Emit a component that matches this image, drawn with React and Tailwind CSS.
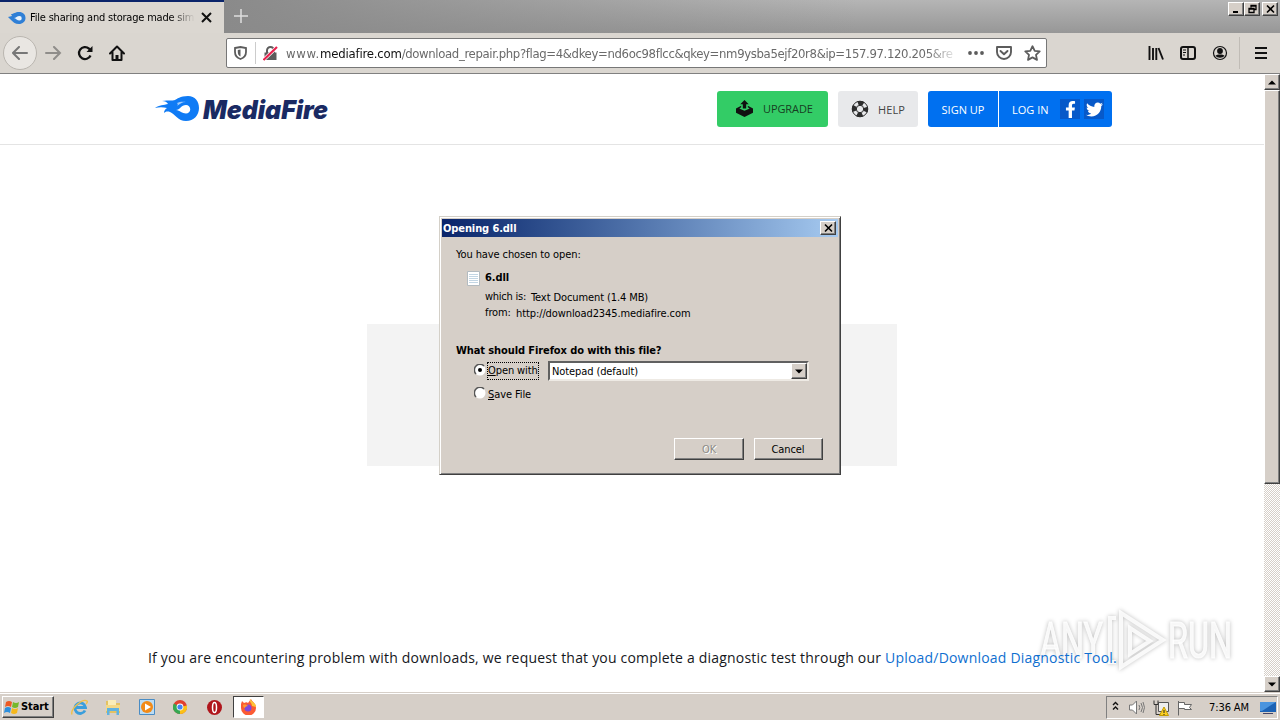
import { FaFacebookF, FaTwitter } from 'react-icons/fa'

const tahoma = "font-['DejaVu_Sans_Condensed','DejaVu_Sans',sans-serif] [font-stretch:condensed]"
const raised = 'bg-[#d6cfc8] border border-t-white border-l-white border-r-[#404040] border-b-[#404040] shadow-[inset_-1px_-1px_0_#808080]'

function ArrowButton({ up }) {
  return (
    <div className={`${raised} w-4 h-4 shrink-0 flex items-center justify-center`}>
      <svg width="8" height="5" viewBox="0 0 8 5"><path d={up ? 'M0 4.5h8L4 .5z' : 'M0 .5h8L4 4.5z'} /></svg>
    </div>
  )
}

function CaptionButton({ children, className = '' }) {
  return (
    <div className={`${raised} w-4 h-[14px] flex items-center justify-center ${className}`}>
      <svg width="11" height="10" viewBox="0 0 11 10" fill="none" stroke="#000">{children}</svg>
    </div>
  )
}

function TabBar() {
  return (
    <div className="h-[33px] shrink-0 flex bg-linear-to-b from-[#b5b5b5] to-[#979797]">
      <div className="w-56 bg-[#dbd7d1] border-t-2 border-[#0a246a] flex items-center pl-2">
        <svg width="18" height="14" viewBox="0 0 18 14">
          <path d="M0 6l4-1-1-2c3 0 4-2 8-2 4 0 6.500 2.500 6.500 6s-3 6-6.500 6c-4 0-6-2-9-5z" fill="#2f7fd6" />
          <path d="M6 7c2 0 3-2 5.500-2a2.200 2.200 0 010 4.500C9 9.500 8 7.500 6 7z" fill="#e8f2fc" />
        </svg>
        <span className={`${tahoma} text-[11px] tracking-[-0.2px] ml-1 pt-px w-[165px] overflow-hidden whitespace-nowrap mask-r-from-85%`}>
          File sharing and storage made simple
        </span>
        <svg className="ml-[6px]" width="11" height="11" viewBox="0 0 11 11" stroke="#111" strokeWidth="2"><path d="M1 1l9 9M10 1l-9 9" /></svg>
      </div>
      <div className="flex-1 flex items-start bg-linear-to-r from-[#8a8a8a] to-transparent to-60%">
        <svg className="mt-[9px] ml-[10px]" width="14" height="14" viewBox="0 0 14 14" stroke="#dedede" strokeWidth="1.500"><path d="M7 0v14M0 7h14" /></svg>
        <div className="ml-auto mr-[2px] mt-[2px] flex">
          <CaptionButton><path d="M2 8h5" strokeWidth="2" /></CaptionButton>
          <CaptionButton><path d="M4 3.500V1.500h5v4H7M4 2h5M2 4.500h5v4H2zM2 5h5" strokeWidth="1.300" /></CaptionButton>
          <CaptionButton className="ml-[2px]"><path d="M2 1.500l7 7M9 1.500l-7 7" strokeWidth="1.600" /></CaptionButton>
        </div>
      </div>
    </div>
  )
}

function NavBar() {
  return (
    <div className="h-[41px] shrink-0 flex items-center bg-[#dad6d0] border-b border-[#808080]">
      <div className="ml-[3px] size-[34px] rounded-full border border-[#bab6b0] bg-[#e9e6e2] flex items-center justify-center">
        <svg width="16" height="14" viewBox="0 0 16 14" fill="none" stroke="#777" strokeWidth="2" strokeLinecap="round"><path d="M15 7H1M7 1L1 7l6 6" /></svg>
      </div>
      <svg className="ml-2" width="17" height="14" viewBox="0 0 17 14" fill="none" stroke="#8f8d8a" strokeWidth="2" strokeLinecap="round"><path d="M1 7h14M9 1l6 6-6 6" /></svg>
      <svg className="ml-[15px]" width="16" height="16" viewBox="0 0 16 16" fill="none" stroke="#111" strokeWidth="2.300">
        <path d="M13.500 10.500A6 6 0 1112 3.600L13.500 5" /><path d="M15.500 1v6h-6z" fill="#111" stroke="none" />
      </svg>
      <svg className="ml-4" width="16" height="16" viewBox="0 0 16 16" fill="none" stroke="#111" strokeWidth="2" strokeLinejoin="round" strokeLinecap="round">
        <path d="M1 8.500l7-7 7 7M3.500 7.500V15h9V7.500" /><path d="M8 15v-5" strokeWidth="3" strokeLinecap="butt" />
      </svg>
      <div className="ml-[101px] w-[821px] h-[30px] bg-white border border-[#777] rounded-[2px] flex items-center">
        <svg className="ml-[7px]" width="13" height="14" viewBox="0 0 13 14" fill="none" stroke="#5c5c5c" strokeWidth="1.800">
          <path d="M1 2l5.500-1L12 2v4c0 4-2.500 6-5.500 7C3.500 12 1 10 1 6z" /><path d="M6.500 3.500v7C4.500 9.500 3.800 8 3.800 6V4z" fill="#5c5c5c" stroke="none" />
        </svg>
        <div className="ml-2 w-px h-[22px] bg-[#ccc]" />
        <svg className="ml-[7px]" width="15" height="15" viewBox="0 0 15 15" fill="none">
          <path d="M4 7V4.500a3.500 3.500 0 017 0V7" stroke="#5c5c5c" strokeWidth="2" /><path d="M1.500 6.500h12V14h-12z" fill="#5c5c5c" />
          <path d="M.5 14L14 1" stroke="#fff" strokeWidth="3.400" /><path d="M.5 14L14 1" stroke="#e8224e" strokeWidth="2.200" />
        </svg>
        <span className="font-['DejaVu_Sans_Condensed','DejaVu_Sans',sans-serif] text-[13px] tracking-[-0.36px] text-[#6a6a6a] ml-[8px] pt-px w-[674px] overflow-hidden whitespace-nowrap mask-r-from-95%">
          <span className="tracking-[0.7px]">www.</span><span className="tracking-[-0.2px] text-[#111]">mediafire.com</span>/download_repair.php?flag=4&amp;dkey=nd6oc98flcc&amp;qkey=nm9ysba5ejf20r8&amp;ip=157.97.120.205&amp;re
        </span>
        <svg className="ml-2" width="16" height="4" viewBox="0 0 16 4" fill="#5c5c5c"><circle cx="2" cy="2" r="1.900" /><circle cx="8" cy="2" r="1.900" /><circle cx="14" cy="2" r="1.900" /></svg>
        <svg className="ml-3" width="16" height="14" viewBox="0 0 16 14" fill="none" stroke="#5c5c5c" strokeWidth="1.900" strokeLinecap="round" strokeLinejoin="round">
          <path d="M1 1h14v5a7 7 0 01-14 0z" /><path d="M4.500 5L8 8.300 11.500 5" />
        </svg>
        <svg className="ml-3" width="17" height="16" viewBox="0 0 17 16" fill="none" stroke="#5c5c5c" strokeWidth="1.800" strokeLinejoin="round">
          <path d="M8.500 1.200l2.200 4.600 5 .6-3.700 3.500 1 5-4.500-2.500L4 14.900l1-5L1.300 6.400l5-.6z" />
        </svg>
      </div>
      <svg className="ml-[101px]" width="16" height="14" viewBox="0 0 16 14" stroke="#111" strokeWidth="1.900"><path d="M1.500 0v14M5 2v12M8.300 2v12M10.500 2l4.500 11.500" /></svg>
      <svg className="ml-4" width="16" height="14" viewBox="0 0 16 14" fill="none" stroke="#111" strokeWidth="2">
        <rect x="1" y="1" width="14" height="12" rx="2" /><path d="M8 1v12" strokeWidth="1.500" /><path d="M3 4h3M3 6.500h3M3 9h2" strokeWidth="1" />
      </svg>
      <svg className="ml-4" width="16" height="16" viewBox="0 0 16 16">
        <circle cx="8" cy="8" r="6.500" fill="none" stroke="#111" strokeWidth="1.200" /><circle cx="8" cy="6" r="2.900" fill="#111" /><path d="M3.500 10.500c1.500-1.500 7.500-1.500 9 0-1.500 3-7.500 3-9 0z" fill="#111" />
      </svg>
      <div className="ml-[11px] w-px h-[32px] bg-[#c0bcb6]" />
      <svg className="ml-[15px]" width="12" height="12" viewBox="0 0 12 12" stroke="#111" strokeWidth="2"><path d="M0 1h12M0 6h12M0 11h12" /></svg>
    </div>
  )
}

function Logo() {
  return (
    <svg className="ml-[155px] mt-[20px]" width="176" height="34" viewBox="0 0 176 34">
      <path d="M0 14c4-3 9-3 13-4-1-2-3-3-6-3 7-1 10 0 13-1 2-1 5-4 13-4 7 0 11 5 11 12s-5 13-13 13c-8 0-11-7-16-9-3-1-5 0-6 1 0-2 1-4 3-5-4-1-8-1-12 0z" fill="#0f7bf5" />
      <path d="M21 16c4 0 5-5 10-5a4.200 4.200 0 010 8.500c-4 0-6-3-10-3.500z" fill="#fff" />
      <path d="M22 9c3-1.500 6-1.500 9-1-4 0-6 2-9 4 1-1 1-2 0-3z" fill="#fff" opacity=".6" />
      <text x="48" y="24.500" textLength="125" lengthAdjust="spacingAndGlyphs" fill="#1a2a63" className="font-['Inter',sans-serif] text-[26px] font-black italic">MediaFire</text>
    </svg>
  )
}

function Header() {
  return (
    <div className="h-[71px] flex items-start border-b border-[#e4e4e4] font-['Open_Sans',sans-serif] text-[11px]">
      <Logo />
      <div className="ml-[386px] mt-[17px] flex h-9">
        <div className="w-[111px] rounded-[3px] bg-[#33cc66] text-[#173d22] flex items-center">
          <svg className="ml-[19px] -mt-px" width="17" height="17" viewBox="0 0 18 18" fill="#111">
            <path d="M9 0l4.500 4.500h-2.700V9H7.200V4.500H4.500z" /><path d="M0 9l5.500-3v1.800L3.500 9 9 11.500 14.500 9l-2-1.200V6L18 9v4.500L9 18l-9-4.500z" />
          </svg>
          <span className="ml-[10px] tracking-[-0.1px]">UPGRADE</span>
        </div>
        <div className="ml-[10px] w-20 rounded-[3px] bg-[#e8e9eb] text-[#444] flex items-center">
          <svg className="ml-[13px]" width="18" height="18" viewBox="0 0 18 18" fill="none" stroke="#2c2c2c">
            <circle cx="9" cy="9" r="7.800" /><circle cx="9" cy="9" r="3.700" /><circle cx="9" cy="9" r="5.900" strokeWidth="4.200" strokeDasharray="5.400 3.867" strokeDashoffset="2.700" />
          </svg>
          <span className="ml-[9px] tracking-[0.1px] pt-[2px]">HELP</span>
        </div>
        <div className="ml-[10px] w-[70px] rounded-l-[3px] bg-[#0070f0] text-white flex items-center justify-center pt-[2px]">SIGN UP</div>
        <div className="ml-px w-[113px] rounded-r-[3px] bg-[#0070f0] text-white flex items-center">
          <span className="ml-[13px] w-[48px] pt-[2px] whitespace-nowrap">LOG IN</span>
          <div className="size-5 bg-[#0759c9] flex items-end justify-center pb-px"><FaFacebookF size={17} /></div>
          <div className="ml-1 size-5 bg-[#0759c9] flex items-center justify-center pt-px"><FaTwitter size={17} /></div>
        </div>
      </div>
    </div>
  )
}

function Scrollbar() {
  return (
    <div className="w-4 shrink-0 flex flex-col bg-[repeating-conic-gradient(#d6cfc8_0_25%,#ffffff_0_50%)] bg-size-[2px_2px]">
      <ArrowButton up />
      <div className={`${raised} h-[394px]`} />
      <div className="flex-1" />
      <ArrowButton />
    </div>
  )
}

function Radio({ checked }) {
  return (
    <svg className="-mt-[2px]" width="12" height="12" viewBox="0 0 12 12">
      <circle cx="6" cy="6" r="5.500" fill="#fff" />
      <path d="M2 10A5.500 5.500 0 0110 2" fill="none" stroke="#555" strokeWidth="1.500" />
      {checked && <circle cx="6" cy="6" r="2" />}
    </svg>
  )
}

function Dialog() {
  return (
    <div className={`${tahoma} absolute left-[439px] top-[216px] w-[402px] h-[259px] bg-[#d6cfc8] border border-t-[#d4d0c8] border-l-[#d4d0c8] border-r-[#404040] border-b-[#404040] shadow-[inset_1px_1px_0_#fff,inset_-1px_-1px_0_#808080] p-[2px] text-[11px] leading-4 tracking-[-0.1px] whitespace-nowrap`}>
      <div className="h-[18px] flex items-center bg-linear-to-r from-[#0a246a] to-[#a6caf0] text-white font-bold pl-px">
        <span className="pt-px">Opening 6.dll</span>
        <CaptionButton className="ml-auto mr-[2px]"><path d="M2 1.500l7 7M9 1.500l-7 7" strokeWidth="1.600" /></CaptionButton>
      </div>
      <div className="pl-[14px] pt-[10px] flex flex-col">
        <div>You have chosen to open:</div>
        <div className="mt-[7px] ml-[11px] flex font-bold">
          <svg className="mt-px mr-[4px]" width="14" height="15" viewBox="0 0 14 15">
            <path d="M.5.500h12v14H.5z" fill="#fff" stroke="#b3bbc0" /><path d="M2 3.500h9M2 5.500h9M2 7.500h9M2 9.500h9M2 11.500h9" stroke="#c3d6e4" />
          </svg>
          6.dll
        </div>
        <div className="mt-[3px] ml-[29px] flex"><span className="w-[46px] tracking-[-0.25px]">which is:</span><span className="pt-px -mb-px">Text Document (1.4 MB)</span></div>
        <div className="ml-[29px] flex"><span className="w-[31px]">from:</span><span className="pt-px -mb-px tracking-[-0.1px]">http://download2345.mediafire.com</span></div>
        <div className="mt-[22px] font-bold">What should Firefox do with this file?</div>
        <div className="mt-[2px] ml-[18px] h-5 flex items-center">
          <Radio checked />
          <span className="ml-[1px] w-[52px] border border-dotted border-black"><span className="underline">O</span>pen with</span>
          <div className="ml-[9px] w-[261px] h-5 bg-white border-2 border-t-[#606060] border-l-[#606060] border-r-[#eeeae4] border-b-[#eeeae4] flex items-center pl-[2px]">
            <span className="pt-px">Notepad (default)</span>
            <div className="ml-auto"><ArrowButton /></div>
          </div>
        </div>
        <div className="mt-[3px] ml-[18px] h-5 flex items-center"><Radio /><span className="ml-[2px] pt-px"><span className="underline">S</span>ave File</span></div>
        <div className="mt-[34px] ml-[218px] flex">
          <div className={`${raised} w-[70px] h-[22px] flex items-center justify-center pt-px text-[#8c8c86] [text-shadow:1px_1px_0_#fff]`}>OK</div>
          <div className={`${raised} ml-[10px] w-[69px] h-[22px] flex items-center justify-center pt-px pr-px`}>Cancel</div>
        </div>
      </div>
    </div>
  )
}

function Watermark() {
  return (
    <svg className="absolute left-[1034px] top-[604px] drop-shadow-[0_0_2px_rgba(0,0,0,0.3)]" width="206" height="72" viewBox="0 0 206 72">
      <g fill="#fff" fillOpacity=".85" stroke="#fff" strokeOpacity=".85" className="font-['Roboto',sans-serif] text-[50px]">
        <text x="6" y="54" textLength="63" lengthAdjust="spacingAndGlyphs">ANY</text>
        <text x="134" y="54" textLength="64" lengthAdjust="spacingAndGlyphs">RUN</text>
      </g>
      <path d="M82 14h-6v44h6M87 9v54l42-27zM96 24v26l20-13z" fill="none" stroke="#fff" strokeWidth="4" strokeOpacity=".85" />
    </svg>
  )
}

function Taskbar() {
  return (
    <div className={`${tahoma} h-7 shrink-0 bg-[#d6cfc8] border-t border-[#d6cfc8] shadow-[inset_0_1px_0_#fff] flex items-start pt-[3px] text-[11px] tracking-[-0.1px]`}>
      <div className={`${raised} ml-[2px] w-[52px] h-[22px] flex items-center pl-[1px] font-bold`}>
        <svg className="mr-px" width="16" height="16" viewBox="0 0 16 16">
          <path d="M2 3q3-2 6 0L7 8Q4 6 1 8z" fill="#ed5a24" /><path d="M9 3q3 2 6 0l-1 5q-3 2-6 0z" fill="#76b82a" />
          <path d="M1 9q3-2 6 0l-1 5q-3-2-6 0z" fill="#2d8fdd" /><path d="M8 9q3 2 6 0l-1 5q-3 2-6 0z" fill="#f6b81c" />
        </svg>
        <span className="pt-px">Start</span>
      </div>
      <svg className="ml-[17px] mt-[3px]" width="17" height="17" viewBox="0 0 17 17" fill="none">
        <path d="M14 11.500a5.300 5.300 0 11.500-3H4" stroke="#3a9edc" strokeWidth="2.800" /><path d="M1 15.500C-1 10 12-1 16 2c1 1 0 2-1 3" stroke="#efc04a" strokeWidth="1.400" />
      </svg>
      <svg className="ml-[17px] mt-[3px]" width="16" height="17" viewBox="0 0 16 17">
        <path d="M1 2h5l1 2h8v10H1z" fill="#e3c262" /><path d="M3 1h8v6H3z" fill="#f9edb8" /><path d="M1 6h14v6H1z" fill="#f3d987" /><path d="M2 9h12v7h-2.500v-4h-7v4H2z" fill="#5fb2e0" />
      </svg>
      <svg className="ml-[18px] mt-[3px]" width="16" height="16" viewBox="0 0 16 16">
        <path d="M.5.500h15v15H.5z" fill="#bcdcf3" stroke="#4a8cc4" /><circle cx="8" cy="8" r="6" fill="#f28a17" /><path d="M6 4.500v7L12 8z" fill="#fff" />
      </svg>
      <svg className="ml-[18px] mt-[4px]" width="14" height="14" viewBox="0 0 14 14">
        <circle cx="7" cy="7" r="7" fill="#e0402f" /><path d="M7 7L.9 3.500A7 7 0 007 14z" fill="#36a853" /><path d="M7 7L13.900 5.500A7 7 0 017 14z" fill="#fbc116" /><circle cx="7" cy="7" r="3.400" fill="#fff" /><circle cx="7" cy="7" r="2.600" fill="#4285f4" />
      </svg>
      <svg className="ml-[20px] mt-[4px]" width="15" height="15" viewBox="0 0 15 15">
        <circle cx="7.500" cy="7.500" r="7.500" fill="#b0161c" /><ellipse cx="7.500" cy="7.500" rx="2" ry="5" fill="#b0161c" stroke="#fff" strokeWidth="1.500" />
      </svg>
      <div className="ml-[11px] w-[31px] h-[22px] bg-white border border-t-[#404040] border-l-[#404040] border-r-white border-b-white flex items-center justify-center">
        <svg width="17" height="16" viewBox="0 0 17 16">
          <path d="M1 5l1-3 2 2c2-1 3-1 4 0l3-4c1 3 5 4 5 9a7.500 7.500 0 01-15 0z" fill="#fb5b33" /><path d="M10 0c-1 3 2 4 2 7l4 1c0-4-4-5-6-8z" fill="#fdc536" /><circle cx="8" cy="9" r="3.500" fill="#7e49dc" /><path d="M3 6c2-1 4 0 5 1-2 0-3 1-3 2-1 0-2-1-2-3z" fill="#ff9b31" />
        </svg>
      </div>
      <div className="ml-auto mr-[2px] w-[172px] h-[23px] border border-t-[#808080] border-l-[#808080] border-white flex items-center">
        <svg className="ml-[5px] -mt-[3px]" width="7" height="10" viewBox="0 0 7 10" fill="none" stroke="#111" strokeWidth="1.400"><path d="M1 4l2.500-2.500L6 4M1 8.500L3.500 6 6 8.500" /></svg>
        <svg className="ml-[10px] -mt-px" width="16" height="15" viewBox="0 0 16 15" fill="#fff" stroke="#777">
          <path d="M.5 5h3l4-4v13l-4-4h-3z" /><path d="M10 5q1.500 2.500 0 5M12 3q3 4.500 0 9M14 2q3 5.500 0 11" fill="none" />
        </svg>
        <svg className="ml-2" width="16" height="16" viewBox="0 0 16 16" fill="none" stroke="#555">
          <path d="M5.500 2.500h10v9h-10z" fill="#eee" /><path d="M1 .5v4h4v-4M3 4.500v10h4" stroke="#333" /><path d="M6.500 15.500L11 7l4.500 8.500z" fill="#fbcf22" stroke="#c29a00" /><path d="M11 10v3M11 14v1" stroke="#222" />
        </svg>
        <svg className="ml-2" width="16" height="16" viewBox="0 0 16 16" fill="#fff" stroke="#666"><path d="M1.500 1v14.500M1.500 2.500h6v2h7l-2 3 2 2h-7v-1h-6z" /></svg>
        <span className="ml-[16px] pt-px w-[41px] whitespace-nowrap">7:36 AM</span>
        <svg className="ml-[10px]" width="16" height="14" viewBox="0 0 16 14"><path d="M0 1h16v10H0z" fill="#1c62b4" /><path d="M0 1h16L2 10H0z" fill="#4a94de" /><path d="M3 12h10v1H3z" fill="#446" /></svg>
      </div>
    </div>
  )
}

export default function App() {
  return (
    <div className="relative w-[1280px] h-[720px] overflow-hidden flex flex-col bg-white text-black">
      <TabBar />
      <NavBar />
      <div className="flex-1 flex">
        <div className="flex-1 flex flex-col">
          <Header />
          <div className="mt-[179px] ml-[367px] w-[530px] h-[142px] bg-[#f3f3f3]" />
          <p className="relative z-10 mt-[182px] ml-[148px] font-['Open_Sans',sans-serif] text-[14px] leading-5 tracking-[0.2px] whitespace-nowrap text-[#15171c]">
            If you are encountering problem with downloads, we request that you complete a diagnostic test through our <span className="text-[#0f6fd0]">Upload/Download Diagnostic Tool.</span>
          </p>
        </div>
        <Scrollbar />
      </div>
      <Taskbar />
      <Dialog />
      <Watermark />
    </div>
  )
}
